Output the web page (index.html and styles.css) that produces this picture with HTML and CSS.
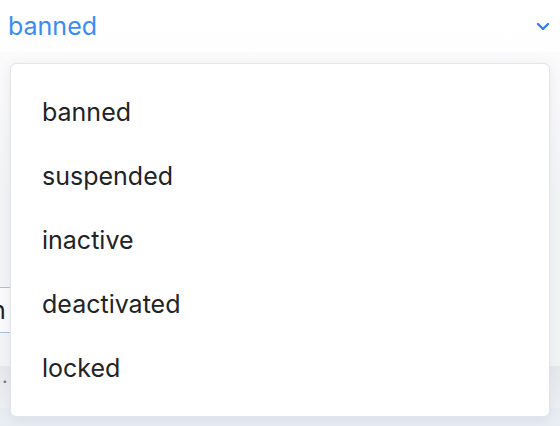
FILE: index.html
```html
<!DOCTYPE html>
<html>
<head>
<meta charset="utf-8">
<link rel="stylesheet" href="styles.css">
</head>
<body>
<div class="page">
  <div class="select-row">
    <span class="select-value">banned</span>
    <svg class="chevron" width="14" height="9" viewBox="0 0 14 9"><path d="M2 2 L7 7 L12 2" fill="none" stroke="#2f80ed" stroke-width="2.4" stroke-linecap="round" stroke-linejoin="round"/></svg>
  </div>
  <div class="body-area">
    <div class="spacer"></div>
    <div class="input-box"><span class="input-text">n</span></div>
    <div class="gap"></div>
    <div class="band"><span class="dot">.</span></div>
    <div class="bottom"></div>
  </div>
  <ul class="menu">
    <li class="menu-item">banned</li>
    <li class="menu-item">suspended</li>
    <li class="menu-item">inactive</li>
    <li class="menu-item">deactivated</li>
    <li class="menu-item">locked</li>
  </ul>
</div>
</body>
</html>
```
FILE: styles.css
```css
html, body {
  margin: 0;
  padding: 0;
}
body {
  width: 560px;
  height: 426px;
  overflow: hidden;
  font-family: Inter, "Noto Sans", sans-serif;
  background: #f5f6f8;
}
.page {
  position: relative;
  width: 560px;
  height: 426px;
  display: flex;
  flex-direction: column;
}
.select-row {
  height: 52px;
  display: flex;
  align-items: center;
  justify-content: space-between;
  padding: 0 10px 0 8px;
  background: linear-gradient(#ffffff, #fefefe);
}
.select-value {
  font-size: 25px;
  color: #3b8cf0;
}
.chevron {
  display: block;
}
.body-area {
  flex: 1;
  display: flex;
  flex-direction: column;
  background: linear-gradient(#fbfbfc, #f3f4f6 40%);
}
.spacer {
  height: 235px;
}
.input-box {
  height: 44px;
  width: 30px;
  border-top: 1px solid #a9c2de;
  border-bottom: 1px solid #a9c2de;
  background: #fbfbfc;
  display: flex;
  align-items: center;
  overflow: hidden;
}
.input-text {
  font-size: 25px;
  color: #1f1f1f;
  margin-left: -9px;
}
.gap {
  height: 33px;
}
.band {
  height: 42px;
  background: linear-gradient(#e6e8ec, #eef0f3);
  display: flex;
  align-items: flex-start;
}
.dot {
  font-size: 20px;
  color: #777;
  margin-left: 2px;
  line-height: 20px;
}
.bottom {
  flex: 1;
  background: #e8edf4;
}
.menu {
  position: absolute;
  left: 10px;
  top: 63px;
  width: 538px;
  margin: 0;
  padding: 16px 0;
  list-style: none;
  background: #ffffff;
  border: 1px solid #e3e4e7;
  border-radius: 6px;
  box-shadow: 0 2px 14px rgba(20, 30, 50, 0.07);
}
.menu-item {
  height: 64px;
  display: flex;
  align-items: center;
  padding-left: 31px;
  font-size: 25px;
  color: #222325;
}
```
